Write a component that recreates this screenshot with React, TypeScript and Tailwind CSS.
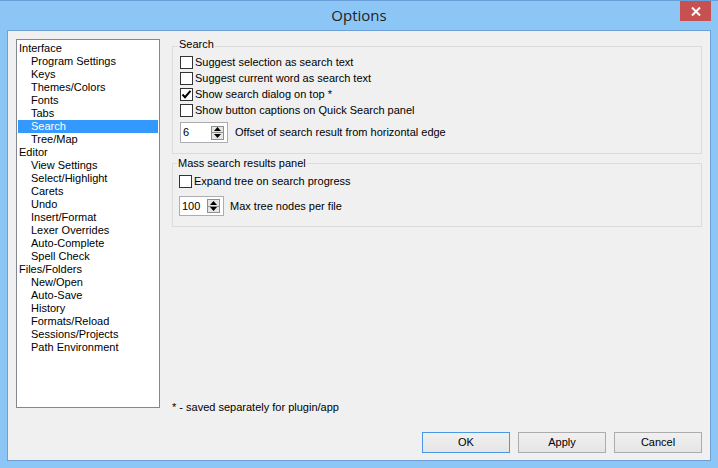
import React from "react";

const treeItems: { label: string; level: number }[] = [
  { label: "Interface", level: 0 },
  { label: "Program Settings", level: 1 },
  { label: "Keys", level: 1 },
  { label: "Themes/Colors", level: 1 },
  { label: "Fonts", level: 1 },
  { label: "Tabs", level: 1 },
  { label: "Search", level: 1 },
  { label: "Tree/Map", level: 1 },
  { label: "Editor", level: 0 },
  { label: "View Settings", level: 1 },
  { label: "Select/Highlight", level: 1 },
  { label: "Carets", level: 1 },
  { label: "Undo", level: 1 },
  { label: "Insert/Format", level: 1 },
  { label: "Lexer Overrides", level: 1 },
  { label: "Auto-Complete", level: 1 },
  { label: "Spell Check", level: 1 },
  { label: "Files/Folders", level: 0 },
  { label: "New/Open", level: 1 },
  { label: "Auto-Save", level: 1 },
  { label: "History", level: 1 },
  { label: "Formats/Reload", level: 1 },
  { label: "Sessions/Projects", level: 1 },
  { label: "Path Environment", level: 1 },
];

function CheckRow({ label, checked = false }: { label: string; checked?: boolean }) {
  return (
    <div className="h-[16px] flex items-center gap-[2px]">
      <div className="w-[13px] h-[13px] border border-[#333333] bg-white flex items-center justify-center">
        {checked && (
          <svg width="11" height="11" viewBox="0 0 11 11">
            <path d="M1.5 5.5 L4 8.2 L9.5 1.8" fill="none" stroke="#000" strokeWidth="2" />
          </svg>
        )}
      </div>
      <span>{label}</span>
    </div>
  );
}

function Spin({ value, wide }: { value: string; wide?: boolean }) {
  return (
    <div
      className={`${wide ? "w-[48px] h-[21px]" : "w-[45px] h-[20px]"} border border-[#abadb3] bg-white flex items-center justify-between pl-[2px] pr-[3px]`}
    >
      <span>{value}</span>
      <div className="w-[13px] h-[14px] border border-[#8e8f8f] bg-[#e6e6e6] flex flex-col">
        <div className="flex-1 flex items-center justify-center border-b border-[#8e8f8f]">
          <svg width="7" height="4" viewBox="0 0 7 4">
            <path d="M0 4 L3.5 0 L7 4 Z" fill="#000" />
          </svg>
        </div>
        <div className="flex-1 flex items-center justify-center">
          <svg width="7" height="4" viewBox="0 0 7 4">
            <path d="M0 0 L3.5 4 L7 0 Z" fill="#000" />
          </svg>
        </div>
      </div>
    </div>
  );
}

function Button({ label, primary }: { label: string; primary?: boolean }) {
  return (
    <div
      className={`w-[88px] h-[21px] flex items-center justify-center border bg-gradient-to-b from-[#f0f0f0] to-[#e5e5e5] ${primary ? "border-[#4a98e3]" : "border-[#acacac]"}`}
    >
      {label}
    </div>
  );
}

export default function App() {
  return (
    <div className="w-[718px] h-[468px] bg-[#8cc6f7] border-t border-[#6a9fd8] flex flex-col font-['Liberation_Sans',Arial,sans-serif] text-[11px] leading-[13px] text-black">
      {/* title bar */}
      <div className="relative h-[29px] flex items-center justify-center">
        <span className="font-['Open_Sans','Noto_Sans',sans-serif] text-[15px] leading-[20px] text-[#222] mt-[-1px]">
          Options
        </span>
        <div className="absolute right-[7px] top-0 w-[31px] h-[20px] bg-[#c75050] flex items-center justify-center">
          <svg width="10" height="9" viewBox="0 0 10 9">
            <path d="M1 0.5 L9 8.5 M9 0.5 L1 8.5" stroke="#fff" strokeWidth="2" />
          </svg>
        </div>
      </div>

      {/* client area */}
      <div className="mx-[7px] mb-[7px] flex-1 border border-[#6e9fd5] bg-[#f0f0f0] flex flex-col pt-[8px] pl-[8px] pr-[8px] pb-[7px]">
        <div className="h-[369px] flex">
          {/* tree */}
          <div className="w-[144px] h-full border border-[#828790] bg-white pt-[2px] px-[1px]">
            {treeItems.map((item) => {
              const selected = item.label === "Search";
              return (
                <div
                  key={item.label}
                  className={`h-[13px] whitespace-nowrap ${item.level === 0 ? "pl-[1px]" : "pl-[13px]"} ${selected ? "bg-[#3399ff] text-white" : ""}`}
                >
                  {item.label}
                </div>
              );
            })}
          </div>

          {/* settings */}
          <div className="flex-1 ml-[12px] flex flex-col">
            <div className="mt-[7px] border border-[#dcdcdc] pl-[7px] pb-[10px]">
              <div className="-mt-[9px] -ml-[2px] w-fit px-[1px] bg-[#f0f0f0]">Search</div>
              <div className="mt-[3px] flex flex-col">
                <CheckRow label="Suggest selection as search text" />
                <CheckRow label="Suggest current word as search text" />
                <CheckRow label="Show search dialog on top *" checked />
                <CheckRow label="Show button captions on Quick Search panel" />
              </div>
              <div className="mt-[4px] flex items-center gap-[7px]">
                <Spin value="6" wide />
                <span>Offset of search result from horizontal edge</span>
              </div>
            </div>

            <div className="mt-[9px] border border-[#dcdcdc] pl-[6px] pb-[10px]">
              <div className="-mt-[7px] -ml-[2px] w-fit px-[1px] bg-[#f0f0f0]">Mass search results panel</div>
              <div className="mt-[3px]">
                <CheckRow label="Expand tree on search progress" />
              </div>
              <div className="mt-[7px] flex items-center gap-[6px]">
                <Spin value="100" />
                <span>Max tree nodes per file</span>
              </div>
            </div>

            <div className="mt-auto -mb-[6px]">* - saved separately for plugin/app</div>
          </div>
        </div>

        {/* buttons */}
        <div className="mt-auto flex justify-end gap-[8px]">
          <Button label="OK" primary />
          <Button label="Apply" />
          <Button label="Cancel" />
        </div>
      </div>
    </div>
  );
}
